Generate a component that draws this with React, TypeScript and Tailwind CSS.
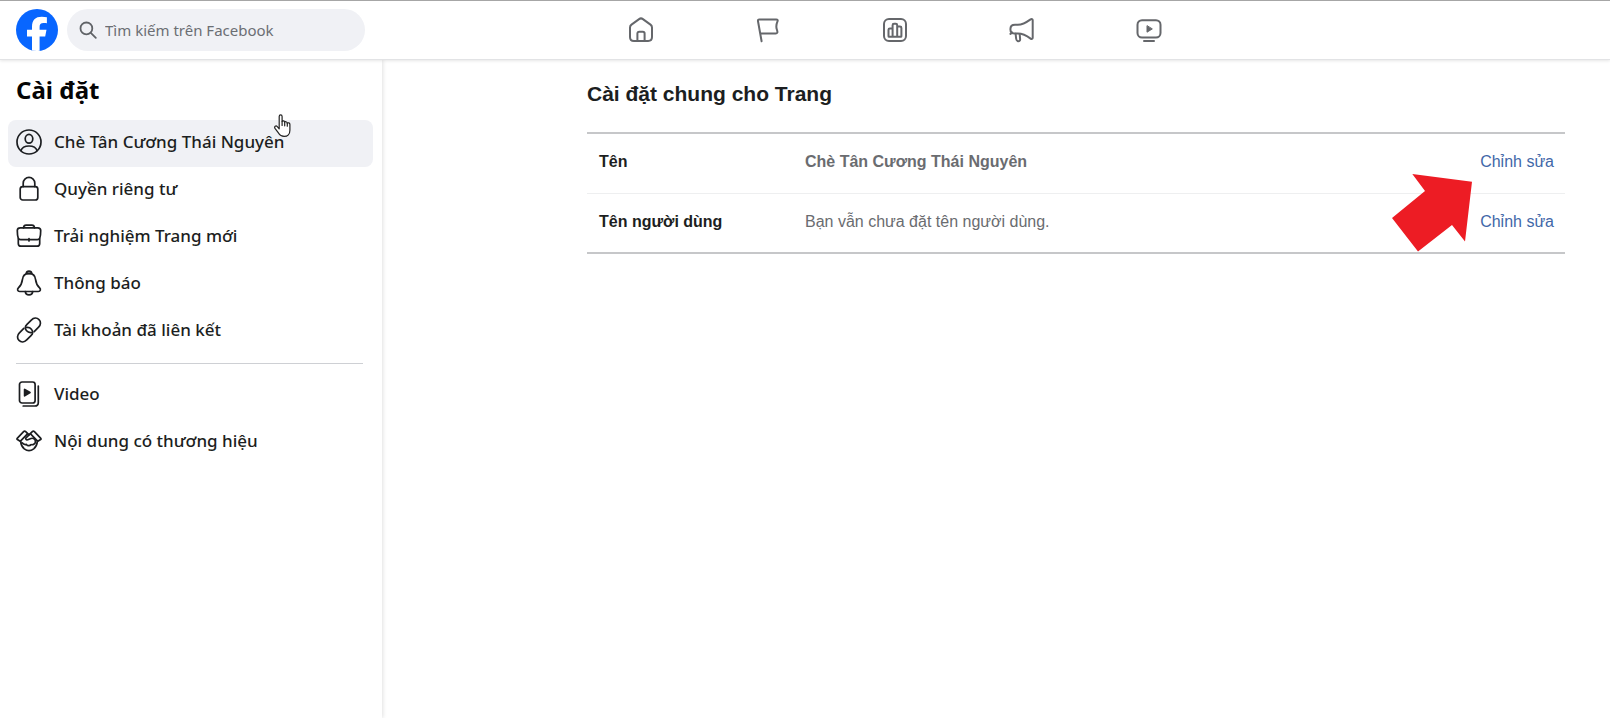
import type { ReactNode } from 'react';

type IconProps = { children: ReactNode; size?: 'nav' | 'menu' };

function Icon({ children, size = 'menu' }: IconProps) {
  return (
    <svg
      viewBox="0 0 26 26"
      className="size-[26px] shrink-0"
      fill="none"
      stroke="currentColor"
      strokeWidth={size === 'nav' ? 2 : 1.7}
      strokeLinecap="round"
      strokeLinejoin="round"
      aria-hidden="true"
    >
      {children}
    </svg>
  );
}

const navItems = [
  {
    label: 'Trang chủ',
    icon: (
      <>
        <path d="M2 10.500c0-1.300.5-2.200 1.500-2.900l7.600-5.500c1.200-.9 2.600-.9 3.800 0l7.600 5.500c1 .7 1.500 1.600 1.500 2.900v9.600c0 2.700-1.200 3.900-3.900 3.900H5.900C3.200 24 2 22.800 2 20.100z" />
        <path d="M9.400 24v-7.400c0-1.200.6-1.800 1.800-1.800h3.600c1.200 0 1.800.6 1.800 1.800V24" />
      </>
    ),
  },
  {
    label: 'Trang',
    icon: (
      <path d="M6.600 24.200 3 4.200C2.800 3 3.200 2.400 4.300 2.400h17c1.300 0 1.700.8 1.200 2-1.500 3.400-1.800 5.300-.5 8.600.8 2.200.5 3.400-1.300 3.400H5.300" />
    ),
  },
  {
    label: 'Thông tin chi tiết',
    icon: (
      <>
        <rect x="2" y="2" width="22" height="22" rx="5" />
        <path d="M6.500 19.200v-6.400c0-1 .4-1.400 1.400-1.400h2.700v8.400H7.100c-.4 0-.6-.2-.6-.6zM10.600 19.800V8.200c0-1 .4-1.400 1.400-1.400h1.800c1 0 1.400.4 1.400 1.400v11.600zM15.200 9.600H18c1 0 1.400.4 1.400 1.400v8.200c0 .4-.2.6-.6.6h-3.600z" />
      </>
    ),
  },
  {
    label: 'Quảng cáo',
    icon: (
      <>
        <path d="M6 7.800h2.800c5.200 0 8.500-2.300 12.800-5.400 1.100-.8 2.100-.4 2.100.9v17.400c0 1.300-1 1.700-2.100.9-4-3-7.400-5-12.800-5H6c-2.800 0-4.600-1.700-4.600-4.400S3.200 7.800 6 7.800z" />
        <path d="m3.300 15.600-1.900 1.300" />
        <path d="m6.600 16.800.6 5.200c.2 1.500.9 2.200 2.100 2.200s2-.9 1.800-2.200l-.4-5" />
      </>
    ),
  },
  {
    label: 'Video',
    icon: (
      <>
        <rect x="1.500" y="3.200" width="23" height="17.300" rx="4.500" />
        <path d="M8 24h10" />
        <path d="M11 9v6.200l5-3.100z" fill="currentColor" strokeWidth="1" />
      </>
    ),
  },
];

const menuItems = [
  {
    label: 'Chè Tân Cương Thái Nguyên',
    active: true,
    icon: (
      <>
        <circle cx="13" cy="13" r="12" />
        <ellipse cx="13" cy="9.800" rx="3.800" ry="4.400" />
        <path d="M5 21.600c1-3.200 3.400-4.600 8-4.600s7 1.400 8 4.600" />
      </>
    ),
  },
  {
    label: 'Quyền riêng tư',
    icon: (
      <>
        <rect x="4.200" y="10.600" width="17.600" height="13.400" rx="2.500" />
        <path d="M7.200 10.600V7.200a5.800 5.800 0 0 1 11.600 0v3.400" />
      </>
    ),
  },
  {
    label: 'Trải nghiệm Trang mới',
    icon: (
      <>
        <path d="M7.500 4.800c.2-1.800 1-2.700 2.600-2.700h5.800c1.600 0 2.400.9 2.600 2.700" />
        <path d="M4.300 4.800h17.400c2 0 3 .9 3 2.700 0 3-.3 5.600-.9 7.500-.4 1.200-1.100 1.700-2.400 1.700H4.600c-1.300 0-2-.5-2.400-1.700-.6-1.900-.9-4.500-.9-7.500 0-1.800 1-2.700 3-2.700zM13 15.600v2.400" />
        <path d="M2.300 15.800v4.600c0 1.900.8 2.800 2.800 2.800h15.800c2 0 2.800-.9 2.800-2.800v-4.600" />
      </>
    ),
  },
  {
    label: 'Thông báo',
    icon: (
      <>
        <path d="M10.200 3.600c.2-1.600 1.200-2.500 2.800-2.500s2.600.9 2.800 2.500z" />
        <path d="M13 3.300c4 0 6.200 2.600 6.600 6.300.4 3.800 1.400 5.800 4 8.300 1.500 1.600.8 3.600-1.300 3.600H3.700c-2.100 0-2.800-2-1.300-3.600 2.600-2.500 3.600-4.500 4-8.300.4-3.700 2.600-6.300 6.600-6.300z" />
        <path d="M9.300 21.600c.2 2.100 1.500 3.300 3.700 3.300s3.500-1.200 3.700-3.300" />
      </>
    ),
  },
  {
    label: 'Tài khoản đã liên kết',
    icon: (
      <>
        <path d="M15.600 15.500c-2 .3-3.800-.3-5-1.700-1.700-2-1.400-4.600.4-6.400l4.300-4.300c2.400-2.400 5.600-2.500 7.700-.5s1.900 5.300-.4 7.600l-4.400 4.400" />
        <path d="M10.400 10.500c2-.3 3.800.3 5 1.700 1.700 2 1.400 4.600-.4 6.400l-4.300 4.300c-2.400 2.400-5.600 2.500-7.700.5s-1.900-5.300.4-7.600l4.400-4.400" />
      </>
    ),
  },
];

const contentItems = [
  {
    label: 'Video',
    icon: (
      <>
        <rect x="3.500" y="1" width="15.600" height="21" rx="2.500" />
        <path d="M22.300 5v16.400c0 2.300-1.100 3.600-3.500 3.600H7.200" />
        <path d="M8.600 8.400v6.400l5.400-3.200z" fill="currentColor" />
      </>
    ),
  },
  {
    label: 'Nội dung có thương hiệu',
    icon: (
      <>
        <path d="m1.400 10.100 6.200-6.400c.7-.7 1.400-.7 2.100 0l2 2-7.500 7.600-2.800-1.800c-.6-.4-.6-.8 0-1.400z" />
        <path d="m24.600 10.100-6.200-6.400c-.7-.7-1.400-.7-2.100 0l-2 2 7.500 7.600 2.800-1.800c.6-.4.6-.8 0-1.400z" />
        <path d="M14.300 5.700 10 9.800c-.8 1 .1 2.500 1.700 2l3.300-1.300c2.200-.8 4.400.7 4.400 2.900 0 2.400-2 3.600-4.300 3.300-1.500 1.500-3.500 1.300-4.700-.3-1.700.4-3.200-.2-4.200-1.600" />
        <path d="M4.600 13.200c.3 3.300 1.600 6 3.700 7.700 3 2.300 6.400 2.300 9.400 0 2.100-1.700 3.400-4.400 3.700-7.700M11.700 5.700 13 6.900" />
      </>
    ),
  },
];

const settings = [
  { name: 'Tên', value: 'Chè Tân Cương Thái Nguyên', strong: true },
  { name: 'Tên người dùng', value: 'Bạn vẫn chưa đặt tên người dùng.', strong: false },
];

type MenuItem = { label: string; icon: ReactNode; active?: boolean };

function MenuList({ items }: { items: MenuItem[] }) {
  return (
    <ul>
      {items.map((item) => (
        <li key={item.label}>
          <a
            href="#"
            className={`flex h-[47px] items-center gap-3 rounded-lg px-2 pb-1 text-[17px] font-medium text-[#1c1e21] ${
              item.active ? 'bg-[#f0f1f5]' : ''
            }`}
          >
            <Icon>{item.icon}</Icon>
            {item.label}
          </a>
        </li>
      ))}
    </ul>
  );
}

function Header() {
  return (
    <header className="z-10 flex h-[60px] items-center border-t border-b border-t-[#a6a6a6] border-b-[#e2e3e5] bg-white shadow-[0_1px_3px_rgba(0,0,0,0.1)]">
      <div className="flex w-[382px] shrink-0 items-center gap-[9px] pr-[17px] pl-4">
        <a href="#" aria-label="Facebook" className="shrink-0">
          <svg viewBox="0 0 42 42" className="size-[42px]" aria-hidden="true">
            <defs>
              <clipPath id="logo">
                <circle cx="21" cy="21" r="21" />
              </clipPath>
            </defs>
            <circle cx="21" cy="21" r="21" fill="#0866ff" />
            <path
              clipPath="url(#logo)"
              fill="#fff"
              d="M16 42V27.500h-5v-6.700h5v-3C16 11 19.200 7.700 25.800 7.700c1.700 0 3.600.2 5.100.5v6.100c-1-.1-2-.2-3.300-.2-3.100 0-4 1.300-4 4v2.700h6.900l-1.300 6.700h-5.600V42z"
            />
          </svg>
        </a>
        <label className="flex h-[42px] flex-1 items-center gap-2 rounded-full bg-[#f0f1f5] px-3 text-[#606367]">
          <svg
            viewBox="0 0 18 18"
            className="size-[18px] shrink-0"
            fill="none"
            stroke="currentColor"
            strokeWidth="1.800"
            strokeLinecap="round"
            aria-hidden="true"
          >
            <circle cx="7.400" cy="7.400" r="5.900" />
            <path d="m11.800 11.800 5 5" />
          </svg>
          <input
            type="search"
            aria-label="Tìm kiếm trên Facebook"
            placeholder="Tìm kiếm trên Facebook"
            className="w-full min-w-0 bg-transparent text-[15px] outline-none placeholder:text-[#6b6e73]"
          />
        </label>
      </div>
      <nav className="flex flex-1 justify-center pr-[202px] text-[#65676b]">
        {navItems.map((item) => (
          <a
            key={item.label}
            href="#"
            aria-label={item.label}
            className="flex w-[127px] items-center justify-center"
          >
            <Icon size="nav">{item.icon}</Icon>
          </a>
        ))}
      </nav>
    </header>
  );
}

export default function App() {
  return (
    <div className="relative flex min-h-screen flex-col bg-white font-['Noto_Sans',sans-serif]">
      <Header />

      <div className="flex flex-1">
        <aside className="w-[382px] shrink-0 pt-3 pr-[9px] pl-2 shadow-[1px_0_4px_rgba(0,0,0,0.12)]">
          <h1 className="mb-3 px-2 text-2xl leading-9 font-bold text-[#050505]">Cài đặt</h1>
          <MenuList items={menuItems} />
          <hr className="mt-2 mr-[10px] mb-2 ml-2 border-[#ced0d4]" />
          <MenuList items={contentItems} />
        </aside>

        <main className="flex-1 pt-5 pr-[45px] pl-[205px] font-['Liberation_Sans',Arial,sans-serif]">
          <h2 className="mb-6 text-[21px] leading-7 font-bold text-[#1c1e21]">
            Cài đặt chung cho Trang
          </h2>
          <table className="w-full border-y-2 border-[#c6c7c9] text-base">
            <tbody>
              {settings.map((row) => (
                <tr key={row.name} className="h-[60px] border-b border-[#eeeff0] last:border-b-0">
                  <th scope="row" className="w-[206px] pb-0.5 pl-3 text-left font-bold text-[#1c1e21]">
                    {row.name}
                  </th>
                  <td className={`pb-0.5 pl-3 text-[#6a6c70] ${row.strong ? 'font-bold' : ''}`}>
                    {row.value}
                  </td>
                  <td className="pr-[11px] pb-0.5 text-right">
                    <a href="#" className="text-[#4267a8]">
                      Chỉnh sửa
                    </a>
                  </td>
                </tr>
              ))}
            </tbody>
          </table>
        </main>
      </div>

      {/* pointer and arrow lie over the page */}
      <svg
        viewBox="0 0 17 24"
        className="pointer-events-none absolute top-[114px] left-[274px] h-6 w-[17px]"
        fill="#fff"
        stroke="#222"
        strokeWidth="1.200"
        strokeLinejoin="round"
        strokeLinecap="round"
        aria-hidden="true"
      >
        <path d="M5.200 14.800V2.500c0-2.200 2.900-2.200 2.900 0v5c.5-1 2.400-.8 2.500.7.600-.9 2.400-.6 2.600.9.800-.7 2.700-.3 2.700 1.500v5.600c0 3.800-2.200 6.200-5.800 6.200-2.700 0-4.200-1-5.500-3.200L1 14.300c-1.100-1.700.9-3.100 2.300-1.700z" />
        <path d="M8.100 7.500v4M10.700 8.300v3.500M13.300 9.200v3" />
      </svg>
      <svg
        viewBox="0 0 80 78"
        className="pointer-events-none absolute top-[174px] right-[138px] h-[78px] w-20"
        aria-hidden="true"
      >
        <path d="M20.300 0 80 7.700 73 67.500 60 51 26 77.500 0 44 33 17z" fill="#ed1c24" />
      </svg>
    </div>
  );
}
